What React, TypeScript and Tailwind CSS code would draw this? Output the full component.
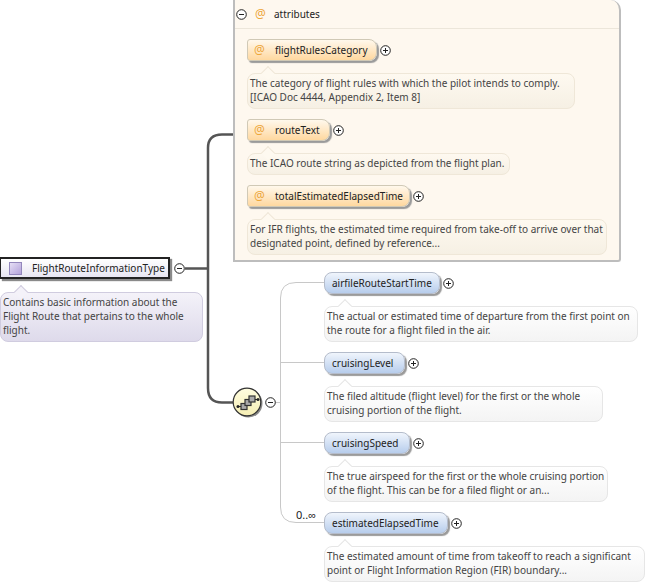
import type { ReactNode } from "react";

function Toggle({ open }: { open?: boolean }) {
  return (
    <svg width="11" height="11" viewBox="0 0 11 11" className="shrink-0">
      <circle cx="5.5" cy="5.5" r="4.8" fill="#fff" stroke="#222" strokeWidth="1" />
      <path d="M3 5.5h5" stroke="#222" strokeWidth="1" />
      {!open && <path d="M5.5 3v5" stroke="#222" strokeWidth="1" />}
    </svg>
  );
}

function Doc({ tone, children, className }: { tone: "attr" | "el" | "root"; children: ReactNode; className: string }) {
  const box = {
    attr: "border-[#efe7d8] bg-gradient-to-b from-[#fef9f0] to-[#f6f0e4]",
    el: "border-[#e6e6e6] bg-gradient-to-b from-[#ffffff] to-[#f4f4f4]",
    root: "border-[#d0ccdf] bg-gradient-to-b from-[#f4f2f9] to-[#dedaeb]",
  }[tone];
  const notch = {
    attr: "border-[#efe7d8] bg-[#fef9f0]",
    el: "border-[#e6e6e6] bg-[#ffffff]",
    root: "border-[#d0ccdf] bg-[#f4f2f9]",
  }[tone];
  return (
    <div className={`relative whitespace-nowrap rounded-[8px] border px-[2px] pb-[4px] pt-[2px] text-[10px] leading-[14px] text-[#444] ${box} ${className}`}>
      <span className={`absolute -top-[6px] left-[15px] size-[10px] rotate-45 border-l border-t ${notch}`} />
      <span className="relative">{children}</span>
    </div>
  );
}

function AttrItem({ name, width, doc, docWidth }: { name: string; width: string; doc: ReactNode; docWidth: string }) {
  return (
    <div className="flex flex-col items-start gap-[12px]">
      <div className="flex items-center gap-[3px]">
        <div className={`flex h-[22px] items-center rounded-bl-[3px] rounded-br-[8px] rounded-tl-[3px] rounded-tr-[8px] border border-[#d0c9b6] bg-gradient-to-b from-[#fff8ec] to-[#ffd89f] pl-[6px] text-[10px] text-[#222] shadow-[2px_2px_1px_#9a9a9a] ${width}`}>
          <span className="w-[21px] shrink-0 text-[12px] text-[#eda63a]">@</span>
          <span>{name}</span>
        </div>
        <Toggle />
      </div>
      <Doc tone="attr" className={docWidth}>{doc}</Doc>
    </div>
  );
}

function ElementItem({ name, width, doc, docWidth }: { name: string; width: string; doc: ReactNode; docWidth: string }) {
  return (
    <div className="flex flex-col items-start gap-[12px]">
      <div className="flex items-center gap-[3px]">
        <div className={`flex h-[22px] items-center rounded-[8px] border border-[#b4bccb] bg-gradient-to-b from-[#f0f5fc] to-[#b7cdec] pl-[7px] text-[10px] text-[#222] shadow-[2px_2px_1px_#9a9a9a] ${width}`}>
          {name}
        </div>
        <Toggle />
      </div>
      <Doc tone="el" className={docWidth}>{doc}</Doc>
    </div>
  );
}

function Connectors() {
  return (
    <svg width="652" height="584" className="absolute left-0 top-0">
      <path d="M185 268.5H208M233 134.5H222Q208 134.5 208 148V388Q208 402.5 222 402.5H233" fill="none" stroke="#555" strokeWidth="2.5" />
      <path d="M275 402.5H280M324 282.5H296Q280.5 282.5 280.5 298V507Q280.5 522.5 296 522.5H324M280.5 362.5H324M280.5 442.5H324" fill="none" stroke="#c8c8c8" strokeWidth="1" />
    </svg>
  );
}

function SequenceIcon() {
  return (
    <svg width="32" height="32" viewBox="0 0 32 32" className="absolute left-[232px] top-[387px]">
      <defs>
        <linearGradient id="seq" x1="0" y1="0" x2="0" y2="1">
          <stop offset="0" stopColor="#fffde0" />
          <stop offset="1" stopColor="#f6efb4" />
        </linearGradient>
      </defs>
      <circle cx="16.5" cy="16.5" r="14" fill="#8a8a8a" />
      <circle cx="15" cy="15" r="13.8" fill="url(#seq)" stroke="#333" strokeWidth="1.2" />
      <path d="M6 19.5h3M22 12.5h4" stroke="#222" strokeWidth="1.2" />
      <circle cx="6" cy="19.5" r="1.5" fill="#222" />
      <circle cx="26" cy="12.5" r="1.5" fill="#222" />
      <rect x="9" y="16.5" width="6" height="6" fill="#aaa" stroke="#333" strokeWidth="1.2" />
      <rect x="13" y="12.5" width="6" height="6" fill="#aaa" stroke="#333" strokeWidth="1.2" />
      <rect x="17" y="9" width="6" height="6" fill="#aaa" stroke="#333" strokeWidth="1.2" />
    </svg>
  );
}

export default function App() {
  return (
    <div className="relative h-[584px] w-[652px] overflow-hidden bg-white font-['Noto_Sans',sans-serif]">
      <Connectors />

      <div className="absolute left-0 top-[257px] flex w-[203px] flex-col items-start gap-[13px]">
        <div className="flex items-center gap-[4px]">
          <div className="flex h-[22px] w-[170px] items-center border-2 border-l-[1px] border-[#222] bg-gradient-to-b from-white to-[#e8e6f2] pl-[8px] text-[10px] text-[#222] shadow-[2px_2px_1px_#8a8a8a]">
            <span className="mr-[10px] size-[13px] shrink-0 border border-[#9387bc] bg-gradient-to-br from-[#e6dff5] to-[#b3a2da]" />
            FlightRouteInformationType
          </div>
          <Toggle open />
        </div>
        <Doc tone="root" className="w-[203px]">
          Contains basic information about the<br />Flight Route that pertains to the whole<br />flight.
        </Doc>
      </div>

      <div className="absolute left-[233px] top-0 h-[262px] w-[388px] rounded-br-[3px] rounded-tr-[10px] border-2 border-t-0 border-[#bdbdbd] bg-[#fef8ef]">
        <div className="flex h-[29px] items-center border-b border-[#ece6da] pl-[1px] text-[10px] text-[#222]">
          <Toggle open />
          <span className="ml-[8px] w-[19px] text-[12px] text-[#eda63a]">@</span>
          <span>attributes</span>
        </div>
        <div className="flex flex-col gap-[10px] pl-[12px] pt-[10px]">
          <AttrItem
            name="flightRulesCategory"
            width="w-[130px]"
            docWidth="w-[328px]"
            doc={<>The category of flight rules with which the pilot intends to comply.<br />[ICAO Doc 4444, Appendix 2, Item 8]</>}
          />
          <AttrItem name="routeText" width="w-[83px]" docWidth="w-[263px]" doc="The ICAO route string as depicted from the flight plan." />
          <AttrItem
            name="totalEstimatedElapsedTime"
            width="w-[163px]"
            docWidth="w-[360px]"
            doc={<>For IFR flights, the estimated time required from take-off to arrive over that<br />designated point, defined by reference...</>}
          />
        </div>
      </div>

      <SequenceIcon />
      <div className="absolute left-[265px] top-[397px]"><Toggle open /></div>

      <span className="absolute left-[296px] top-[507px] text-[11px] text-[#222]">0..∞</span>

      <div className="absolute left-[324px] top-[272px] flex flex-col gap-[10px]">
        <ElementItem
          name="airfileRouteStartTime"
          width="w-[116px]"
          docWidth="w-[314px]"
          doc={<>The actual or estimated time of departure from the first point on<br />the route for a flight filed in the air.</>}
        />
        <ElementItem
          name="cruisingLevel"
          width="w-[81px]"
          docWidth="w-[279px]"
          doc={<>The filed altitude (flight level) for the first or the whole<br />cruising portion of the flight.</>}
        />
        <ElementItem
          name="cruisingSpeed"
          width="w-[86px]"
          docWidth="w-[284px]"
          doc={<>The true airspeed for the first or the whole cruising portion<br />of the flight. This can be for a filed flight or an...</>}
        />
        <ElementItem
          name="estimatedElapsedTime"
          width="w-[124px]"
          docWidth="w-[321px]"
          doc={<>The estimated amount of time from takeoff to reach a significant<br />point or Flight Information Region (FIR) boundary...</>}
        />
      </div>
    </div>
  );
}
